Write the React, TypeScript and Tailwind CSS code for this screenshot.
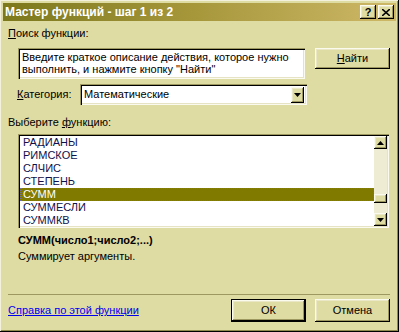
import React from "react";

const sunken =
  "shadow-[inset_1px_1px_0_#9c9860,inset_2px_2px_0_#000,inset_-1px_-1px_0_#fbfaf0,inset_-2px_-2px_0_#e6e3c4]";
const raised =
  "shadow-[inset_-1px_-1px_0_#000,inset_1px_1px_0_#fbfaee,inset_-2px_-2px_0_#9c9860,inset_2px_2px_0_#e9e7c6]";

const functions = ["РАДИАНЫ", "РИМСКОЕ", "СЛЧИС", "СТЕПЕНЬ", "СУММ", "СУММЕСЛИ", "СУММКВ"];

function Arrow({ up = false }: { up?: boolean }) {
  return (
    <svg width="7" height="4" viewBox="0 0 7 4" className={up ? "rotate-180" : ""}>
      <path d="M0 0h7L3.5 4z" fill="#000" />
    </svg>
  );
}

export default function App() {
  return (
    <div
      className="relative h-[332px] w-[399px] overflow-hidden bg-[#dedba3] p-[3px] text-[11px] leading-[13px] text-black shadow-[inset_-1px_-1px_0_#000,inset_1px_1px_0_#f3f1dc,inset_-2px_-2px_0_#8f8b4f]"
      style={{ fontFamily: '"Liberation Sans", Arial, sans-serif' }}
    >
      {/* title bar */}
      <div className="flex h-[18px] items-center justify-between bg-gradient-to-r from-[#7c781c] via-[#a8983c] to-[#cdb867] pl-[2px] pr-[2px]">
        <span className="text-[12px] font-bold text-white">Мастер функций - шаг 1 из 2</span>
        <div className="flex gap-[2px]">
          <div className={`flex h-[14px] w-[16px] items-center justify-center bg-[#dedba3] text-[11px] font-bold ${raised}`}>?</div>
          <div className={`flex h-[14px] w-[16px] items-center justify-center bg-[#dedba3] ${raised}`}>
            <svg width="8" height="7" viewBox="0 0 8 7">
              <path d="M0 0L8 7M8 0L0 7" stroke="#000" strokeWidth="1.6" />
            </svg>
          </div>
        </div>
      </div>

      <div className="flex flex-col pl-[5px] pr-[6px]">
        <div className="mt-[6px] h-[13px]">
          <u>П</u>оиск функции:
        </div>

        <div className="mt-[8px] flex items-start">
          <div className={`ml-[10px] h-[31px] w-[287px] bg-white px-[4px] pt-[3px] leading-[12px] ${sunken}`}>
            Введите краткое описание действия, которое нужно выполнить, и нажмите кнопку "Найти"
          </div>
          <button className={`ml-[10px] flex h-[21px] w-[75px] items-center justify-center bg-[#dedba3] ${raised}`}>
            <u>Н</u>айти
          </button>
        </div>

        <div className="mt-[5px] flex items-center">
          <span className="ml-[9px] w-[63px]">
            <u>К</u>атегория:
          </span>
          <div className={`flex h-[21px] w-[227px] items-center justify-between bg-white pl-[4px] pr-[3px] ${sunken}`}>
            <span>Математические</span>
            <div className={`flex h-[16px] w-[13px] items-center justify-center bg-[#dedba3] ${raised}`}>
              <Arrow />
            </div>
          </div>
        </div>

        <div className="mt-[11px] h-[13px]">
          Выберите <u>ф</u>ункцию:
        </div>

        <div className={`ml-[10px] mt-[5px] flex h-[94px] w-[371px] bg-white p-[2px] ${sunken}`}>
          <div className="flex flex-1 flex-col">
            {functions.map((f) => (
              <div
                key={f}
                className={`h-[13px] pl-[3px] ${
                  f === "СУММ"
                    ? "bg-[#807a00] text-white outline-dotted outline-1 -outline-offset-1 outline-[#6a6ab8]"
                    : "text-[#10104a]"
                }`}
              >
                {f}
              </div>
            ))}
          </div>
          <div className="flex w-[13px] flex-col bg-[#eeecd2]">
            <div className={`flex h-[13px] items-center justify-center bg-[#dedba3] ${raised}`}>
              <Arrow up />
            </div>
            <div className="h-[45px]" />
            <div className={`h-[9px] bg-[#dedba3] ${raised}`} />
            <div className="flex-1" />
            <div className={`flex h-[13px] items-center justify-center bg-[#dedba3] ${raised}`}>
              <Arrow />
            </div>
          </div>
        </div>

        <div className="ml-[10px] mt-[6px] h-[13px] font-bold">СУММ(число1;число2;...)</div>
        <div className="ml-[10px] mt-[3px] h-[13px]">Суммирует аргументы.</div>

        <div className="mt-[31px] h-[2px] w-[382px] border-t border-[#9c9860] border-b-white" />

        <div className="mt-[3px] flex items-center justify-between">
          <a className="text-[#0000ee] underline">Справка по этой функции</a>
          <div className="flex gap-[9px]">
            <button className={`flex h-[23px] w-[75px] items-center justify-center border border-black bg-[#dedba3] ${raised}`}>
              ОК
            </button>
            <button className={`flex h-[23px] w-[75px] items-center justify-center bg-[#dedba3] ${raised}`}>
              Отмена
            </button>
          </div>
        </div>
      </div>
    </div>
  );
}
